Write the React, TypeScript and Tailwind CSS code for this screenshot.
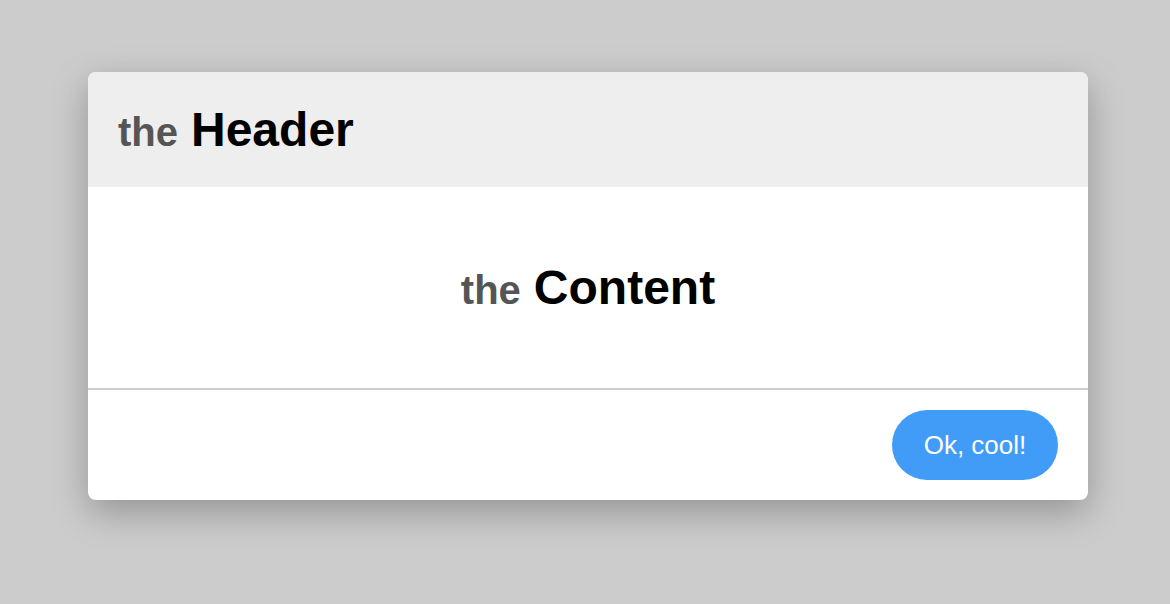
import React from "react";

const App: React.FC = () => {
  return (
    <div
      className="min-h-screen w-full bg-[#cccccc] pt-[72px] pl-[88px]"
      style={{ fontFamily: '"Liberation Sans", Arial, sans-serif' }}
    >
      <div className="w-[1000px] bg-white rounded-[8px] overflow-hidden shadow-[0_12px_36px_rgba(0,0,0,0.28)]">
        <div className="h-[115px] bg-[#eeeeee] flex items-center px-[30px]">
          <h1 className="font-bold leading-none flex items-baseline gap-[13px]">
            <span className="text-[40px] text-[#555555]">the</span>
            <span className="text-[48px] text-black">Header</span>
          </h1>
        </div>

        <div className="h-[201px] flex items-center justify-center">
          <h2 className="font-bold leading-none flex items-baseline gap-[13px]">
            <span className="text-[40px] text-[#555555]">the</span>
            <span className="text-[48px] text-black">Content</span>
          </h2>
        </div>

        <div className="h-[2px] bg-[#cccccc]" />

        <div className="flex justify-end px-[30px] py-[20px]">
          <button className="h-[70px] w-[166px] rounded-full bg-[#409cf6] text-white text-[26px] leading-none">
            Ok, cool!
          </button>
        </div>
      </div>
    </div>
  );
};

export default App;
